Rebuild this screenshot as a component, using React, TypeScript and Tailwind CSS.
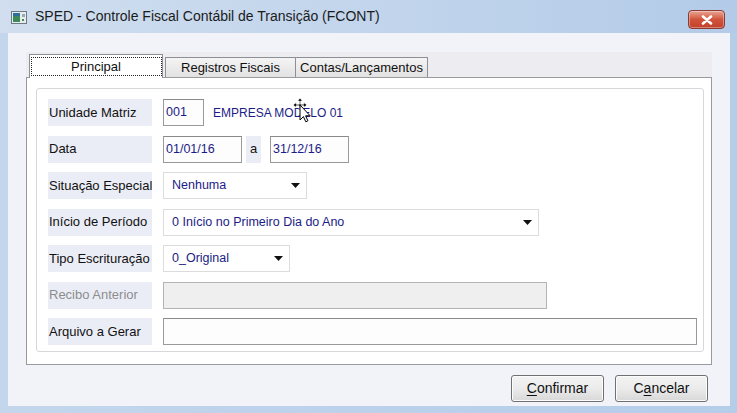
import React from "react";

const font = { fontFamily: '"Liberation Sans", Arial, sans-serif' };

function Label({ text, disabled }: { text: string; disabled?: boolean }) {
  return (
    <div
      className={`flex h-full w-[104px] shrink-0 items-center whitespace-nowrap bg-[#ebedf6] pl-[1px] text-[13px] ${
        disabled ? "text-[#8d8d8d]" : "text-[#111]"
      }`}
    >
      {text}
    </div>
  );
}

function TextBox({ w, value, disabled }: { w: string; value?: string; disabled?: boolean }) {
  return (
    <div
      className={`flex h-full items-center border pl-[2px] text-[12.5px] text-[#1c1c86] ${w} ${
        disabled ? "border-[#b4b4b4] bg-[#efefef]" : "border-[#9a9a9a] border-t-[#8a8a8a] bg-[#fdfdfd]"
      }`}
    >
      {value}
    </div>
  );
}

function Combo({ w, value }: { w: string; value: string }) {
  return (
    <div
      className={`flex h-full items-center justify-between border border-[#dcdcdc] bg-white pl-[8px] pr-[6px] text-[12.5px] text-[#1c1c86] ${w}`}
    >
      <span>{value}</span>
      <svg width="9" height="5" viewBox="0 0 9 5">
        <path d="M0 0h9L4.5 5z" fill="#111" />
      </svg>
    </div>
  );
}

function Row({ children }: { children: React.ReactNode }) {
  return <div className="flex h-[27px] items-stretch">{children}</div>;
}

function WinButton({ pre, u, post }: { pre: string; u: string; post: string }) {
  return (
    <button className="flex h-[27px] w-[93px] items-center justify-center rounded-[3px] border border-[#707070] bg-gradient-to-b from-[#f3f3f3] via-[#ebebeb] to-[#d8d8d8] text-[14px] text-[#111] shadow-[inset_0_0_0_1px_#fcfcfc]">
      {pre}
      <span className="underline underline-offset-2">{u}</span>
      {post}
    </button>
  );
}

export default function App() {
  return (
    <div
      className="flex h-[413px] w-[737px] flex-col overflow-hidden bg-gradient-to-r from-[#c3d6ec] to-[#b4cde9]"
      style={font}
    >
      {/* title bar */}
      <div className="relative flex h-[33px] shrink-0 items-center bg-gradient-to-r from-[#d0deef] via-[#c2d5ec] to-[#b3cbe8] pl-[11px]">
        <svg width="16" height="13" viewBox="0 0 16 13" className="mt-[1px]">
          <rect x="0.5" y="0.5" width="15" height="12" fill="#e8ecef" stroke="#6b7b86" />
          <rect x="2" y="2" width="7" height="9" fill="#3c8a5a" />
          <rect x="2" y="2" width="7" height="3" fill="#2f6e9a" />
          <rect x="11" y="3" width="3" height="3" fill="#9aa8b0" />
          <rect x="11" y="8" width="2" height="2" fill="#4a8a4a" />
        </svg>
        <span className="ml-[8px] text-[14px] text-[#1b1b1b]">
          SPED - Controle Fiscal Contábil de Transição (FCONT)
        </span>
        <div className="absolute right-[12px] top-[10px] flex h-[19px] w-[37px] items-center justify-center rounded-[4px] border border-[#8a3a30] bg-gradient-to-b from-[#e8a493] via-[#d0533c] to-[#c2412b] shadow-[inset_0_0_0_1px_rgba(255,255,255,0.35)]">
          <svg width="12" height="10" viewBox="0 0 12 10">
            <path d="M2 1.5L10 8.5M10 1.5L2 8.5" stroke="#ffffff" strokeWidth="2.6" strokeLinecap="round" />
          </svg>
        </div>
      </div>

      {/* client */}
      <div className="mb-[7px] ml-[8px] mr-[7px] flex flex-1 flex-col bg-[#f2f2f9] pl-[18px] pr-[18px] pt-[19px]">
        {/* tab strip */}
        <div className="flex h-[25px] items-end bg-[#ececf1] pl-[3px]">
          <div className="relative z-10 -mb-px flex h-[24px] w-[134px] items-start justify-center border border-b-0 border-[#8e8f94] bg-white pt-[2px]">
            <div className="flex h-[19px] w-[131px] items-center justify-center border border-dotted border-[#222] text-[13px] text-[#111]">
              Principal
            </div>
          </div>
          <div className="ml-[2px] flex h-[20px] w-[131px] items-center justify-center border border-b-0 border-[#8e8f94] bg-gradient-to-b from-[#f4f4f4] to-[#e2e2e2] text-[13px] text-[#111]">
            Registros Fiscais
          </div>
          <div className="-ml-px flex h-[20px] w-[133px] items-center justify-center border border-b-0 border-[#8e8f94] bg-gradient-to-b from-[#f4f4f4] to-[#e2e2e2] text-[13px] text-[#111]">
            Contas/Lançamentos
          </div>
        </div>

        {/* tab panel */}
        <div className="h-[288px] w-[686px] border border-[#9a9a9f] bg-white pb-[12px] pl-[9px] pr-[7px] pt-[10px]">
          <div className="flex h-full flex-col gap-[9.5px] rounded-[3px] border border-[#d8d8dc] pl-[11px] pt-[10px]">
            <Row>
              <Label text="Unidade Matriz" />
              <div className="ml-[11px] flex">
                <TextBox w="w-[41px]" value="001" />
              </div>
              <div className="relative ml-[9px] flex items-center text-[12px] text-[#1c1c86]">
                EMPRESA MODELO 01
                <svg
                  width="22"
                  height="26"
                  viewBox="0 0 22 26"
                  className="absolute left-[79px] top-[-2px]"
                >
                  <path d="M8 1l-2.5 3h1.8v3.2H4.2V5.4L1 8l3.2 2.6V8.8h3.1V12h1.4V8.8h3.1v1.8L15 8l-3.2-2.6v1.8H8.7V4h1.8z" fill="#000" stroke="#fff" strokeWidth="0.8" />
                  <path d="M8 8v15l3.4-3.4 2.4 5.2 2.1-1-2.3-5h4.6z" fill="#fff" stroke="#000" strokeWidth="1" />
                </svg>
              </div>
            </Row>
            <Row>
              <Label text="Data" />
              <div className="ml-[11px] flex">
                <TextBox w="w-[79px]" value="01/01/16" />
              </div>
              <div className="ml-[4px] flex w-[15px] items-center justify-center bg-[#ebedf6] text-[13px] text-[#111]">
                a
              </div>
              <div className="ml-[9px] flex">
                <TextBox w="w-[79px]" value="31/12/16" />
              </div>
            </Row>
            <Row>
              <Label text="Situação Especial" />
              <div className="ml-[11px] flex">
                <Combo w="w-[144px]" value="Nenhuma" />
              </div>
            </Row>
            <Row>
              <Label text="Início de Período" />
              <div className="ml-[11px] flex">
                <Combo w="w-[376px]" value="0 Início no Primeiro Dia do Ano" />
              </div>
            </Row>
            <Row>
              <Label text="Tipo Escrituração" />
              <div className="ml-[11px] flex">
                <Combo w="w-[127px]" value="0_Original" />
              </div>
            </Row>
            <Row>
              <Label text="Recibo Anterior" disabled />
              <div className="ml-[11px] flex">
                <TextBox w="w-[384px]" disabled />
              </div>
            </Row>
            <Row>
              <Label text="Arquivo a Gerar" />
              <div className="ml-[11px] flex">
                <TextBox w="w-[534px]" />
              </div>
            </Row>
          </div>
        </div>

        {/* buttons */}
        <div className="mr-[4px] mt-[10px] flex justify-end gap-[11px]">
          <WinButton pre="" u="C" post="onfirmar" />
          <WinButton pre="C" u="a" post="ncelar" />
        </div>
      </div>
    </div>
  );
}
